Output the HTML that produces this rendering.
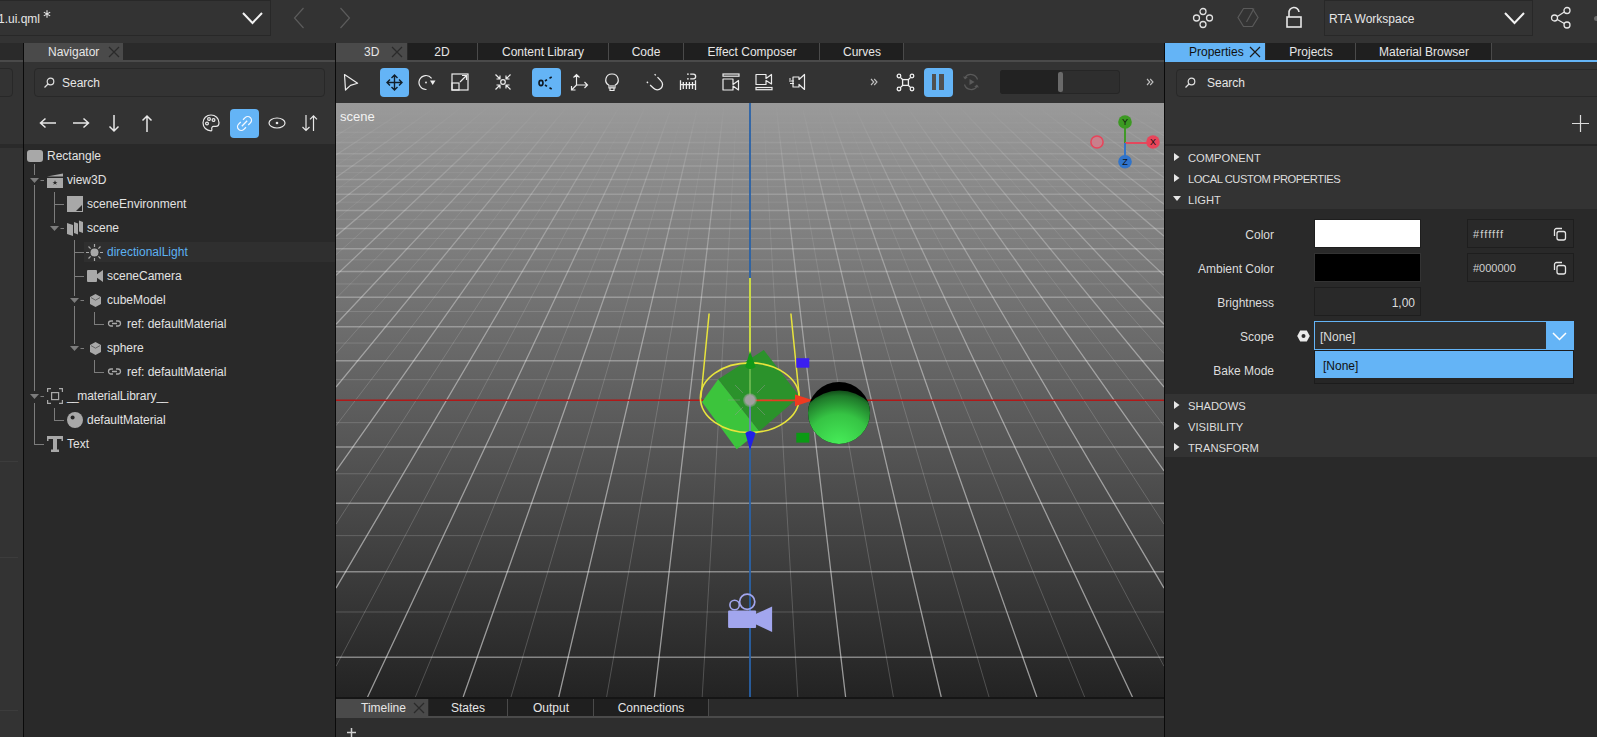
<!DOCTYPE html><html><head><meta charset="utf-8"><style>
*{box-sizing:border-box}
html,body{margin:0;padding:0}
body{width:1597px;height:737px;overflow:hidden;background:#333333;position:relative;font-family:"Liberation Sans",sans-serif;font-size:12px;color:#dcdcdc}
.a{position:absolute}
.t{position:absolute;white-space:nowrap;line-height:14px}
svg{position:absolute;overflow:visible}
</style></head><body>

<div class="a" style="left:0;top:0;width:1597px;height:43px;background:#333333"></div>
<div class="a" style="left:-2px;top:0;width:273px;height:36px;background:#333333;border:1px solid #282828"></div>
<div class="t" style="left:-2px;top:12px;font-size:12px;color:#e6e6e6">1.ui.qml</div>
<svg style="left:43px;top:10px" width="8" height="8"><path d="M4 0.3V7.7M0.8 2.1L7.2 5.9M0.8 5.9L7.2 2.1" stroke="#e6e6e6" stroke-width="1.1"/></svg>
<svg style="left:242px;top:12px" width="22" height="13"><path d="M1 1L10.5 11L20 1" stroke="#f2f2f2" stroke-width="2" fill="none"/></svg>
<svg style="left:293px;top:7px" width="12" height="22"><path d="M10.5 1L1.5 11L10.5 21" stroke="#5c5c5c" stroke-width="1.2" fill="none"/></svg>
<svg style="left:339px;top:7px" width="12" height="22"><path d="M1.5 1L10.5 11L1.5 21" stroke="#5c5c5c" stroke-width="1.2" fill="none"/></svg>
<svg style="left:1190px;top:6px" width="26" height="24" fill="none" stroke="#e0e0e0" stroke-width="1.3"><circle cx="13" cy="5.5" r="3"/><circle cx="13" cy="18.5" r="3"/><circle cx="6.5" cy="12" r="3"/><circle cx="19.5" cy="12" r="3"/></svg>
<svg style="left:1237px;top:7px" width="24" height="22" fill="none" stroke="#5a5a5a" stroke-width="1.2"><path d="M6.5 1.5H15.5L21 10.5L15.5 19.5H6.5L1 10.5Z"/><path d="M17 1.5L9.5 15"/></svg>
<svg style="left:1285px;top:7px" width="18" height="22" fill="none" stroke="#e6e6e6" stroke-width="1.6"><rect x="2" y="10" width="14" height="10"/><path d="M4 10V6A5 5 0 0 1 14 5"/></svg>
<div class="a" style="left:1324px;top:0;width:209px;height:36px;background:#333333;border:1px solid #282828"></div>
<div class="t" style="left:1329px;top:12px;font-size:12px;color:#e6e6e6">RTA Workspace</div>
<svg style="left:1504px;top:12px" width="22" height="13"><path d="M1 1L10.5 11L20 1" stroke="#f2f2f2" stroke-width="2" fill="none"/></svg>
<svg style="left:1550px;top:6px" width="24" height="24" fill="none" stroke="#e6e6e6" stroke-width="1.3"><circle cx="17" cy="4.5" r="3"/><circle cx="17" cy="19" r="3"/><circle cx="4.5" cy="12" r="3"/><path d="M7.3 10.5L14.3 6M7.3 13.5L14.3 17.5"/></svg>
<div class="a" style="left:1594px;top:16px;width:5px;height:5px;border-radius:50%;background:#6a6a6a"></div>
<div class="a" style="left:0;top:43px;width:23px;height:694px;background:#2e2e2e"></div>
<div class="a" style="left:0;top:43px;width:23px;height:17px;background:#2a2a2a"></div>
<div class="a" style="left:0;top:60px;width:23px;height:2px;background:#4a4a4a"></div>
<div class="a" style="left:0;top:62px;width:23px;height:82px;background:#333333"></div>
<div class="a" style="left:-10px;top:68px;width:23px;height:29px;border:1px solid #282828;border-radius:4px;background:#333333"></div>
<div class="a" style="left:0;top:144px;width:23px;height:593px;background:#333333"></div>
<div class="a" style="left:0;top:144px;width:23px;height:4px;background:#2a2a2a"></div>
<div class="a" style="left:0;top:461px;width:18px;height:1px;background:#3c3c3c"></div>
<div class="a" style="left:0;top:557px;width:18px;height:1px;background:#3c3c3c"></div>
<div class="a" style="left:0;top:710px;width:18px;height:1px;background:#3c3c3c"></div>
<div class="a" style="left:23px;top:43px;width:1px;height:694px;background:#0a0a0a"></div>
<div class="a" style="left:24px;top:43px;width:311px;height:694px;background:#292929"></div>
<div class="a" style="left:24px;top:43px;width:311px;height:17px;background:#2a2a2a"></div>
<div class="a" style="left:24px;top:43px;width:99px;height:17px;background:#4a4a4a"></div>
<div class="t" style="left:48px;top:45px;color:#e6e6e6">Navigator</div>
<svg style="left:108px;top:46px" width="12" height="12"><path d="M1 1L11 11M11 1L1 11" stroke="#2a2a2a" stroke-width="1.2"/></svg>
<div class="a" style="left:24px;top:60px;width:311px;height:2px;background:#4a4a4a"></div>
<div class="a" style="left:24px;top:62px;width:311px;height:82px;background:#333333"></div>
<div class="a" style="left:34px;top:68px;width:291px;height:29px;border:1px solid #282828;border-radius:4px;background:#333333"></div>
<svg style="left:43px;top:77px" width="12" height="12" fill="none" stroke="#e0e0e0" stroke-width="1.2"><circle cx="7.5" cy="4.5" r="3.3"/><path d="M5 7L1.5 10.5"/></svg>
<div class="t" style="left:62px;top:76px;color:#e6e6e6">Search</div>
<svg style="left:38px;top:116px" width="20" height="14" fill="none" stroke="#e8e8e8" stroke-width="1.5"><path d="M18 7H3M7.5 2.5L2.5 7L7.5 11.5"/></svg>
<svg style="left:71px;top:116px" width="20" height="14" fill="none" stroke="#e8e8e8" stroke-width="1.5"><path d="M2 7H17M12.5 2.5L17.5 7L12.5 11.5"/></svg>
<svg style="left:107px;top:114px" width="14" height="19" fill="none" stroke="#e8e8e8" stroke-width="1.5"><path d="M7 1V17M2.5 12.5L7 17L11.5 12.5"/></svg>
<svg style="left:140px;top:114px" width="14" height="19" fill="none" stroke="#e8e8e8" stroke-width="1.5"><path d="M7 18V2M2.5 6.5L7 2L11.5 6.5"/></svg>
<svg style="left:202px;top:114px" width="18" height="18" fill="none" stroke="#e8e8e8" stroke-width="1.2"><path d="M9 1C4.5 1 1 4.5 1 8.8C1 13.3 4.5 16.8 9 16.8C9.8 16.8 10 16 9.8 15.2C9.4 13.8 10.2 12.4 11.6 12.4H13.8C15.8 12.4 17 11 17 8.8C17 4.5 13.4 1 9 1Z"/><circle cx="7" cy="5" r="1.4"/><circle cx="11.5" cy="6" r="1.4"/><circle cx="5" cy="9.5" r="1.4"/></svg>
<div class="a" style="left:230px;top:109px;width:29px;height:29px;border-radius:4px;background:#64b4f6"></div>
<svg style="left:235px;top:114px" width="19" height="19" fill="none" stroke="#f4f8ff" stroke-width="1.3"><g transform="translate(9.5 9.5) rotate(-45)"><path d="M1.6 -3.7H4.6A3.7 3.7 0 0 1 4.6 3.7H1.6M-1.6 3.7H-4.6A3.7 3.7 0 0 1 -4.6 -3.7H-1.6M-3.8 0H3.8"/></g></svg>
<svg style="left:268px;top:117px" width="18" height="12" fill="none" stroke="#e8e8e8" stroke-width="1.2"><ellipse cx="9" cy="6" rx="8" ry="5"/><circle cx="9" cy="6" r="1.3" fill="#e8e8e8" stroke="none"/></svg>
<svg style="left:301px;top:114px" width="18" height="19" fill="none" stroke="#e8e8e8" stroke-width="1.2"><path d="M5 1V16.5M1.5 13L5 16.5L8.5 13"/><path d="M12.5 17V1.8M9 5.3L12.5 1.8L16 5.3"/></svg>
<div class="a" style="left:24px;top:144px;width:311px;height:593px;background:#292929"></div>
<div class="a" style="left:84px;top:242px;width:251px;height:20px;background:#2f2f2f"></div>
<div class="a" style="left:34px;top:164px;width:1px;height:11px;background:#7c7c7c"></div>
<div class="a" style="left:34px;top:185px;width:1px;height:206px;background:#7c7c7c"></div>
<div class="a" style="left:34px;top:403px;width:1px;height:42px;background:#7c7c7c"></div>
<div class="a" style="left:34px;top:444px;width:10px;height:1px;background:#7c7c7c"></div>
<svg style="left:30px;top:178px" width="15" height="6"><path d="M0 0H9L4.5 5Z" fill="#7c7c7c"/><path d="M10.5 2.5H14" stroke="#7c7c7c" stroke-width="1"/></svg>
<svg style="left:30px;top:394px" width="15" height="6"><path d="M0 0H9L4.5 5Z" fill="#7c7c7c"/><path d="M10.5 2.5H14" stroke="#7c7c7c" stroke-width="1"/></svg>
<div class="a" style="left:54px;top:192px;width:1px;height:31px;background:#7c7c7c"></div>
<div class="a" style="left:54px;top:204px;width:10px;height:1px;background:#7c7c7c"></div>
<svg style="left:50px;top:226px" width="15" height="6"><path d="M0 0H9L4.5 5Z" fill="#7c7c7c"/><path d="M10.5 2.5H14" stroke="#7c7c7c" stroke-width="1"/></svg>
<div class="a" style="left:54px;top:408px;width:1px;height:13px;background:#7c7c7c"></div>
<div class="a" style="left:54px;top:420px;width:10px;height:1px;background:#7c7c7c"></div>
<div class="a" style="left:74px;top:240px;width:1px;height:56px;background:#7c7c7c"></div>
<div class="a" style="left:74px;top:306px;width:1px;height:38px;background:#7c7c7c"></div>
<div class="a" style="left:74px;top:252px;width:10px;height:1px;background:#7c7c7c"></div>
<div class="a" style="left:74px;top:276px;width:10px;height:1px;background:#7c7c7c"></div>
<svg style="left:70px;top:298px" width="15" height="6"><path d="M0 0H9L4.5 5Z" fill="#7c7c7c"/><path d="M10.5 2.5H14" stroke="#7c7c7c" stroke-width="1"/></svg>
<svg style="left:70px;top:346px" width="15" height="6"><path d="M0 0H9L4.5 5Z" fill="#7c7c7c"/><path d="M10.5 2.5H14" stroke="#7c7c7c" stroke-width="1"/></svg>
<div class="a" style="left:94px;top:312px;width:1px;height:13px;background:#7c7c7c"></div>
<div class="a" style="left:94px;top:324px;width:10px;height:1px;background:#7c7c7c"></div>
<div class="a" style="left:94px;top:360px;width:1px;height:13px;background:#7c7c7c"></div>
<div class="a" style="left:94px;top:372px;width:10px;height:1px;background:#7c7c7c"></div>
<div class="a" style="left:27px;top:150px;width:16px;height:12px;border-radius:3px;background:#a8a8a8"></div>
<div class="t" style="left:47px;top:149px;color:#e2e2e2">Rectangle</div>
<svg style="left:46px;top:171px" width="18" height="18"><path d="M1 5.5L17 2.5V5.5Z" fill="#a8a8a8"/><rect x="1" y="7" width="16" height="10" fill="#a8a8a8"/><path d="M9 9.2L9.7 11H11.5L10 12L10.6 13.8L9 12.7L7.4 13.8L8 12L6.5 11H8.3Z" fill="#2a2a2a"/></svg>
<div class="t" style="left:67px;top:173px;color:#e2e2e2">view3D</div>
<svg style="left:67px;top:196px" width="16" height="16"><rect x="0" y="0" width="16" height="16" fill="#a8a8a8"/><path d="M15 9V15H9Z" fill="#2a2a2a"/></svg>
<div class="t" style="left:87px;top:197px;color:#e2e2e2">sceneEnvironment</div>
<svg style="left:67px;top:219px" width="17" height="17" fill="#a8a8a8"><path d="M0 4L6 6V17L0 15Z"/><path d="M7 3L11 4.5V15.5L7 14Z"/><path d="M12 1.5L16 3V14L12 12.5Z"/></svg>
<div class="t" style="left:87px;top:221px;color:#e2e2e2">scene</div>
<svg style="left:86px;top:244px" width="17" height="17"><circle cx="8.5" cy="8.5" r="4" fill="#a8a8a8"/><path d="M8.5 0V3M8.5 14V17M0 8.5H3M14 8.5H17M2.5 2.5L4.6 4.6M12.4 12.4L14.5 14.5M2.5 14.5L4.6 12.4M12.4 4.6L14.5 2.5" stroke="#a8a8a8" stroke-width="1.2"/></svg>
<div class="t" style="left:107px;top:245px;color:#5cb2f2">directionalLight</div>
<svg style="left:87px;top:269px" width="16" height="14" fill="#a8a8a8"><rect x="0" y="1" width="10" height="12" rx="1"/><path d="M9 6L16 1V13L9 8Z"/></svg>
<div class="t" style="left:107px;top:269px;color:#e2e2e2">sceneCamera</div>
<svg style="left:90px;top:294px" width="11" height="13"><path d="M5.5 0L11 3V10L5.5 13L0 10V3Z" fill="#a8a8a8"/><path d="M1 3.6L5.5 6.2L10 3.6" stroke="#5a5a5a" stroke-width="0.9" fill="none"/></svg>
<div class="t" style="left:107px;top:293px;color:#e2e2e2">cubeModel</div>
<svg style="left:108px;top:320px" width="13" height="7" fill="none" stroke="#a8a8a8" stroke-width="1.3"><path d="M5 1H3A2.5 2.5 0 0 0 3 6H5M8 1H10A2.5 2.5 0 0 1 10 6H8M4 3.5H9"/></svg>
<div class="t" style="left:127px;top:317px;color:#e2e2e2">ref: defaultMaterial</div>
<svg style="left:90px;top:342px" width="11" height="13"><path d="M5.5 0L11 3V10L5.5 13L0 10V3Z" fill="#a8a8a8"/><path d="M1 3.6L5.5 6.2L10 3.6" stroke="#5a5a5a" stroke-width="0.9" fill="none"/></svg>
<div class="t" style="left:107px;top:341px;color:#e2e2e2">sphere</div>
<svg style="left:108px;top:368px" width="13" height="7" fill="none" stroke="#a8a8a8" stroke-width="1.3"><path d="M5 1H3A2.5 2.5 0 0 0 3 6H5M8 1H10A2.5 2.5 0 0 1 10 6H8M4 3.5H9"/></svg>
<div class="t" style="left:127px;top:365px;color:#e2e2e2">ref: defaultMaterial</div>
<svg style="left:47px;top:388px" width="17" height="17" fill="none" stroke="#a8a8a8" stroke-width="1.2"><path d="M0.6 4V0.6H4M12 0.6H15.4V4M15.4 12V15.4H12M4 15.4H0.6V12"/><rect x="4.6" y="4.6" width="7" height="7"/></svg>
<div class="t" style="left:67px;top:389px;color:#e2e2e2"><span style="letter-spacing:-1.6px">__</span>materialLibrary<span style="letter-spacing:-1.6px">__</span></div>
<svg style="left:67px;top:412px" width="17" height="17"><circle cx="8" cy="8" r="8" fill="#a8a8a8"/><circle cx="5.6" cy="5.5" r="2" fill="#262626"/></svg>
<div class="t" style="left:87px;top:413px;color:#e2e2e2">defaultMaterial</div>
<svg style="left:47px;top:436px" width="17" height="17" fill="#a8a8a8"><path d="M0 0H16V5H14.5V3H10V13.5H12V16H4V13.5H6V3H1.5V5H0Z"/></svg>
<div class="t" style="left:67px;top:437px;color:#e2e2e2">Text</div>
<div class="a" style="left:335px;top:43px;width:1px;height:694px;background:#0a0a0a"></div>
<div class="a" style="left:336px;top:43px;width:828px;height:17px;background:#2a2a2a"></div>
<div class="a" style="left:336px;top:43px;width:71px;height:17px;background:#4a4a4a"></div>
<div class="a" style="left:408px;top:43px;width:69px;height:17px;background:#1f1f1f"></div>
<div class="a" style="left:477px;top:43px;width:1px;height:17px;background:#4a4a4a"></div>
<div class="a" style="left:478px;top:43px;width:130px;height:17px;background:#1f1f1f"></div>
<div class="a" style="left:608px;top:43px;width:1px;height:17px;background:#4a4a4a"></div>
<div class="a" style="left:609px;top:43px;width:74px;height:17px;background:#1f1f1f"></div>
<div class="a" style="left:683px;top:43px;width:1px;height:17px;background:#4a4a4a"></div>
<div class="a" style="left:684px;top:43px;width:135px;height:17px;background:#1f1f1f"></div>
<div class="a" style="left:819px;top:43px;width:1px;height:17px;background:#4a4a4a"></div>
<div class="a" style="left:820px;top:43px;width:83px;height:17px;background:#1f1f1f"></div>
<div class="a" style="left:903px;top:43px;width:1px;height:17px;background:#4a4a4a"></div>
<div class="t" style="left:364px;top:45px;color:#e6e6e6">3D</div>
<svg style="left:391px;top:46px" width="12" height="12"><path d="M1 1L11 11M11 1L1 11" stroke="#2a2a2a" stroke-width="1.2"/></svg>
<div class="t" style="left:292px;width:300px;text-align:center;top:45px;color:#e6e6e6">2D</div>
<div class="t" style="left:393px;width:300px;text-align:center;top:45px;color:#e6e6e6">Content Library</div>
<div class="t" style="left:496px;width:300px;text-align:center;top:45px;color:#e6e6e6">Code</div>
<div class="t" style="left:602px;width:300px;text-align:center;top:45px;color:#e6e6e6">Effect Composer</div>
<div class="t" style="left:712px;width:300px;text-align:center;top:45px;color:#e6e6e6">Curves</div>
<div class="a" style="left:336px;top:60px;width:828px;height:2px;background:#4a4a4a"></div>
<div class="a" style="left:336px;top:62px;width:828px;height:41px;background:#333333"></div>
<svg style="left:343px;top:73px" width="17" height="19" fill="none" stroke="#ececec" stroke-width="1.2"><path d="M1.5 1.5L14.6 10.2L7.5 12.4L2.5 17Z" stroke-linejoin="round"/></svg>
<div class="a" style="left:380px;top:68px;width:29px;height:29px;border-radius:4px;background:#64b4f6"></div>
<svg style="left:386px;top:74px" width="17" height="17" fill="none" stroke="#12202c" stroke-width="1.4"><path d="M8.5 1V16M1 8.5H16M5.5 4L8.5 1L11.5 4M5.5 13L8.5 16L11.5 13M4 5.5L1 8.5L4 11.5M13 5.5L16 8.5L13 11.5"/></svg>
<svg style="left:418px;top:74px" width="18" height="17" fill="none" stroke="#ececec" stroke-width="1.2"><path d="M13.6 4.3A7 7 0 1 0 8.5 15.5"/><circle cx="8" cy="8.5" r="0.9" fill="#ececec" stroke="none"/><path d="M12 6.5L17.5 6.5L14.7 11Z" fill="#ececec" stroke="none"/></svg>
<svg style="left:451px;top:73px" width="18" height="18" fill="none" stroke="#ececec" stroke-width="1.2"><rect x="1" y="1" width="16" height="16"/><rect x="1" y="10" width="7" height="7"/><path d="M9 9L15.5 2.5M11 2.5H15.5V7"/></svg>
<svg style="left:494px;top:73px" width="18" height="18" fill="none" stroke="#ececec" stroke-width="1.2"><circle cx="9" cy="9" r="2.3"/><path d="M1.5 1.5L6 6M6 2.5V6H2.5M16.5 1.5L12 6M12 2.5V6H15.5M1.5 16.5L6 12M2.5 12H6V15.5M16.5 16.5L12 12M15.5 12H12V15.5"/></svg>
<div class="a" style="left:532px;top:68px;width:29px;height:29px;border-radius:4px;background:#64b4f6"></div>
<svg style="left:537px;top:74px" width="20" height="18" fill="none" stroke="#0e1822"><ellipse cx="4" cy="9" rx="2" ry="2.6" stroke-width="1.6"/><path d="M8 7L10 5.6M12.5 4.2L14.7 3M8 11L10 12.4M12.5 13.8L14.7 15" stroke-width="1.6"/></svg>
<svg style="left:570px;top:73px" width="19" height="19" fill="none" stroke="#ececec" stroke-width="1.2"><path d="M6.5 12V1.5M3.5 4.5L6.5 1.5L9.5 4.5M6.5 12H17.5M14.5 9L17.5 12L14.5 15M6.5 12L1.5 17M1.5 13V17H5.5"/></svg>
<svg style="left:605px;top:73px" width="14" height="19" fill="none" stroke="#ececec" stroke-width="1.2"><path d="M7 1A6 6 0 0 0 4 12.3V15H10V12.3A6 6 0 0 0 7 1Z"/><path d="M5 15V17.5H9V15M6 12V15M8 12V15"/></svg>
<svg style="left:646px;top:73px" width="18" height="18" fill="none" stroke="#ececec" stroke-width="1.2"><path d="M11.5 4.1L15 7.9A5.2 5.2 0 0 1 7.6 15.3L4.1 12.1M8.6 1.2L9.8 2.4M0.8 8.8L2 10" stroke-width="1.3"/></svg>
<svg style="left:679px;top:73px" width="18" height="18" fill="none" stroke="#ececec" stroke-width="1.3"><path d="M1.5 7.2V16.9M16.5 7.2V16.9M1.5 11.7H16.5M4.3 9V15.9M7.4 9V15.9M10.4 9V15.9M13.5 9V15.9"/><path d="M8 1.2H9.8M8 5.9H9.8M11.2 1.2H14.3A2.35 2.35 0 0 1 14.3 5.9H11.2"/></svg>
<svg style="left:722px;top:73px" width="18" height="18" fill="none" stroke="#ececec" stroke-width="1.2"><rect x="1" y="1" width="16" height="2.2"/><path d="M1 6H11V11.5L16.5 7.5V17L11 13V17H1Z" stroke-linejoin="round"/></svg>
<svg style="left:755px;top:73px" width="18" height="18" fill="none" stroke="#ececec" stroke-width="1.2"><path d="M1 1.5H11V5.5L16.5 1.5V11L11 7.5V11.5H1Z" stroke-linejoin="round"/><rect x="1" y="14.5" width="16" height="2.2"/></svg>
<svg style="left:788px;top:73px" width="18" height="18" fill="none" stroke="#ececec" stroke-width="1.2"><path d="M5 4H11V6.5L16.5 1.5V16.5L11 11.5V14H5Z" stroke-linejoin="round"/><path d="M1 8H6M2 10.5H6M1 6H3"/></svg>
<svg style="left:870px;top:78px" width="8" height="8" fill="none" stroke="#c0c0c0" stroke-width="1.1"><path d="M1 1L3.8 4L1 7M4.2 1L7 4L4.2 7"/></svg>
<svg style="left:896px;top:73px" width="19" height="19" fill="none" stroke="#f0f0f0" stroke-width="1.3"><circle cx="3" cy="3" r="1.8"/><circle cx="16" cy="3" r="1.8"/><circle cx="3" cy="16" r="1.8"/><circle cx="16" cy="16" r="1.8"/><rect x="6.6" y="6.6" width="5.8" height="5.8"/><path d="M4.6 4.6L6.3 6.3M14.4 4.6L12.7 6.3M4.6 14.4L6.3 12.7M14.4 14.4L12.7 12.7"/></svg>
<div class="a" style="left:924px;top:68px;width:29px;height:29px;border-radius:4px;background:#64b4f6"></div>
<div class="a" style="left:932px;top:74px;width:4px;height:16px;background:#505050"></div>
<div class="a" style="left:939px;top:74px;width:5px;height:16px;background:#505050"></div>
<svg style="left:962px;top:73px" width="18" height="18" fill="none" stroke="#5a5a5a" stroke-width="1.2"><path d="M2.5 11.5A7 7 0 0 0 15 13.5M15.5 6.5A7 7 0 0 0 3 4.5"/><path d="M7.5 6V12L12.5 9Z" fill="#5a5a5a" stroke="none"/><path d="M1 3.5L3 6.5L5.8 4.3Z M17 14.5L15 11.5L12.2 13.7Z" fill="#5a5a5a" stroke="none"/></svg>
<div class="a" style="left:1000px;top:70px;width:120px;height:24px;border-radius:3px;background:#2e2e2e;border:1px solid #262626"></div>
<div class="a" style="left:1000px;top:70px;width:60px;height:24px;border-radius:3px 0 0 3px;background:#222222"></div>
<div class="a" style="left:1058px;top:72px;width:5px;height:20px;border-radius:2px;background:#6a6a6a"></div>
<svg style="left:1146px;top:78px" width="8" height="8" fill="none" stroke="#c0c0c0" stroke-width="1.1"><path d="M1 1L3.8 4L1 7M4.2 1L7 4L4.2 7"/></svg>
<svg style="left:336px;top:103px;overflow:hidden" width="828" height="594" viewBox="336 103 828 594">
<defs>
<linearGradient id="bg" x1="0" y1="103" x2="0" y2="697" gradientUnits="userSpaceOnUse">
<stop offset="0" stop-color="#9a9a9a"/><stop offset="1" stop-color="#232323"/></linearGradient>
<linearGradient id="fade" x1="0" y1="103" x2="0" y2="697" gradientUnits="userSpaceOnUse">
<stop offset="0" stop-color="#fff" stop-opacity="0"/><stop offset="0.05" stop-color="#fff" stop-opacity="0.12"/><stop offset="0.1" stop-color="#fff" stop-opacity="0.25"/><stop offset="0.2" stop-color="#fff" stop-opacity="0.45"/><stop offset="0.35" stop-color="#fff" stop-opacity="0.65"/><stop offset="0.5" stop-color="#fff" stop-opacity="0.8"/><stop offset="1" stop-color="#fff" stop-opacity="1"/></linearGradient>
<mask id="fm" maskUnits="userSpaceOnUse" x="336" y="103" width="828" height="594"><rect x="336" y="103" width="828" height="594" fill="url(#fade)"/></mask>
<linearGradient id="fade2" x1="0" y1="103" x2="0" y2="697" gradientUnits="userSpaceOnUse">
<stop offset="0" stop-color="#fff" stop-opacity="0"/><stop offset="0.03" stop-color="#fff" stop-opacity="0.05"/><stop offset="0.1" stop-color="#fff" stop-opacity="0.3"/><stop offset="0.25" stop-color="#fff" stop-opacity="0.6"/><stop offset="0.5" stop-color="#fff" stop-opacity="0.8"/><stop offset="1" stop-color="#fff" stop-opacity="1"/></linearGradient>
<mask id="fm2" maskUnits="userSpaceOnUse" x="336" y="103" width="828" height="594"><rect x="336" y="103" width="828" height="594" fill="url(#fade2)"/></mask>
<radialGradient id="sph" cx="839" cy="447" r="60" gradientUnits="userSpaceOnUse">
<stop offset="0" stop-color="#48f05a"/><stop offset="0.55" stop-color="#36c444"/><stop offset="0.85" stop-color="#1f7a2a"/><stop offset="1" stop-color="#0a300f"/></radialGradient>
<radialGradient id="bulb" cx="750" cy="400" r="8" gradientUnits="userSpaceOnUse"><stop offset="0.55" stop-color="#a0a0a0"/><stop offset="1" stop-color="#a0a0a0" stop-opacity="0"/></radialGradient>
</defs>
<rect x="336" y="103" width="828" height="594" fill="url(#bg)"/>
<g mask="url(#fm)">
<path d="M351.24 103.00L336.00 111.36M376.97 103.00L336.00 127.02M402.69 103.00L336.00 144.99M428.42 103.00L336.00 165.85M454.15 103.00L336.00 190.32M479.87 103.00L336.00 219.47M505.60 103.00L336.00 254.74M531.33 103.00L336.00 298.32M557.05 103.00L336.00 353.52M582.78 103.00L336.00 425.70M608.51 103.00L336.00 524.14M634.23 103.00L336.00 666.31M659.96 103.00L415.36 697.00M685.68 103.00L510.97 697.00M711.41 103.00L606.58 697.00M737.14 103.00L702.19 697.00M762.86 103.00L797.81 697.00M788.59 103.00L893.42 697.00M814.32 103.00L989.03 697.00M840.04 103.00L1084.64 697.00M865.77 103.00L1164.00 666.31M891.49 103.00L1164.00 524.14M917.22 103.00L1164.00 425.70M942.95 103.00L1164.00 353.52M968.67 103.00L1164.00 298.32M994.40 103.00L1164.00 254.74M1020.13 103.00L1164.00 219.47M1045.85 103.00L1164.00 190.32M1071.58 103.00L1164.00 165.85M1097.31 103.00L1164.00 144.99M1123.03 103.00L1164.00 127.02M1148.76 103.00L1164.00 111.36" stroke="#ffffff" stroke-opacity="0.2" stroke-width="1" fill="none"/>
<path d="M338.38 103.00L336.00 104.26M364.11 103.00L336.00 118.93M389.83 103.00L336.00 135.68M415.56 103.00L336.00 155.02M441.28 103.00L336.00 177.57M467.01 103.00L336.00 204.23M492.74 103.00L336.00 236.22M518.46 103.00L336.00 275.32M544.19 103.00L336.00 324.20M569.92 103.00L336.00 387.03M595.64 103.00L336.00 470.82M621.37 103.00L336.00 588.12M647.09 103.00L367.56 697.00M672.82 103.00L463.17 697.00M698.55 103.00L558.78 697.00M724.27 103.00L654.39 697.00M775.73 103.00L845.61 697.00M801.45 103.00L941.22 697.00M827.18 103.00L1036.83 697.00M852.91 103.00L1132.44 697.00M878.63 103.00L1164.00 588.12M904.36 103.00L1164.00 470.82M930.08 103.00L1164.00 387.03M955.81 103.00L1164.00 324.20M981.54 103.00L1164.00 275.32M1007.26 103.00L1164.00 236.22M1032.99 103.00L1164.00 204.23M1058.72 103.00L1164.00 177.57M1084.44 103.00L1164.00 155.02M1110.17 103.00L1164.00 135.68M1135.89 103.00L1164.00 118.93M1161.62 103.00L1164.00 104.26" stroke="#ffffff" stroke-opacity="0.54" stroke-width="1.3" fill="none"/>
</g>
<g mask="url(#fm2)">
<path d="M336.00 109.78L1164.00 109.78M336.00 118.28L1164.00 118.28M336.00 127.44L1164.00 127.44M336.00 137.35L1164.00 137.35M336.00 148.10L1164.00 148.10M336.00 159.81L1164.00 159.81M336.00 172.61L1164.00 172.61M336.00 186.65L1164.00 186.65M336.00 202.13L1164.00 202.13M336.00 219.28L1164.00 219.28M336.00 238.39L1164.00 238.39M336.00 259.81L1164.00 259.81M336.00 283.99L1164.00 283.99M336.00 311.49L1164.00 311.49M336.00 343.07L1164.00 343.07M336.00 379.68L1164.00 379.68M336.00 422.65L1164.00 422.65M336.00 473.77L1164.00 473.77M336.00 535.63L1164.00 535.63M336.00 611.98L1164.00 611.98" stroke="#ffffff" stroke-opacity="0.2" stroke-width="1" fill="none"/>
<path d="M336.00 105.76L1164.00 105.76M336.00 113.95L1164.00 113.95M336.00 122.77L1164.00 122.77M336.00 132.30L1164.00 132.30M336.00 142.62L1164.00 142.62M336.00 153.83L1164.00 153.83M336.00 166.06L1164.00 166.06M336.00 179.46L1164.00 179.46M336.00 194.20L1164.00 194.20M336.00 210.48L1164.00 210.48M336.00 228.57L1164.00 228.57M336.00 248.78L1164.00 248.78M336.00 271.52L1164.00 271.52M336.00 297.28L1164.00 297.28M336.00 326.72L1164.00 326.72M336.00 360.67L1164.00 360.67M336.00 447.05L1164.00 447.05M336.00 503.16L1164.00 503.16M336.00 571.69L1164.00 571.69M336.00 657.30L1164.00 657.30" stroke="#ffffff" stroke-opacity="0.44" stroke-width="1.5" fill="none"/>
</g>
<path d="M336 400.3H1164" stroke="#b01818" stroke-width="1.6"/>
<path d="M750.0 103V697" stroke="#2a62a8" stroke-width="1.8"/>
<polygon points="702,402 718.2,379.2 759.4,431.3 736.7,449.3" fill="#3cc43c"/>
<polygon points="718.2,379.2 763.8,349.9 799.6,396.6 759.4,431.3" fill="#2b922b"/>
<g stroke="#9a9a9a" stroke-opacity="0.45" stroke-width="1"><path d="M740 400H728M760 400H772M750 390V380M750 410V420M743 393L735 385M757 393L765 385M743 407L735 415M757 407L765 415"/></g>
<ellipse cx="749.8" cy="397.7" rx="49.4" ry="34.8" fill="none" stroke="#e8e43c" stroke-width="1.6"/>
<path d="M709.1 313.5L700.9 397.7M790.9 313.5L799.2 395.5" stroke="#e8e43c" stroke-width="1.5" fill="none"/>
<path d="M750.0 278V366" stroke="#d2e040" stroke-width="1.9" fill="none"/>
<path d="M750.0 369V400" stroke="#70c050" stroke-width="1.5"/>
<path d="M750.0 400V431" stroke="#7a7ad0" stroke-width="1.5"/>
<path d="M755 400.3H796" stroke="#e83a22" stroke-width="1.8"/>
<path d="M795 394.5L813 400.3L795 406.2Z" fill="#f03a20"/>
<path d="M750.0 351L755.7 367Q750.0 371 745.3 367Z" fill="#109a18"/>
<path d="M750.0 450L755.7 433Q750.0 429 745.3 433Z" fill="#2020e8"/>
<circle cx="750.0" cy="400.3" r="7" fill="url(#bulb)"/>
<rect x="796.3" y="358.2" width="13" height="9.5" fill="#3a1ef0"/>
<rect x="796.3" y="432.8" width="13" height="9.8" fill="#0a9a14"/>
<clipPath id="sc"><circle cx="839" cy="412.9" r="31"/></clipPath>
<circle cx="839" cy="412.9" r="31" fill="#000"/>
<g clip-path="url(#sc)"><circle cx="839.5" cy="432.5" r="41.9" fill="url(#sph)"/></g>
<rect x="728.1" y="610.4" width="28" height="17.5" rx="1" fill="#a2a6ee"/>
<path d="M755.5 614.1L772.1 606.6V632L755.5 624.2Z" fill="#a2a6ee"/>
<circle cx="734.6" cy="605" r="4.7" fill="none" stroke="#a2a6ee" stroke-width="1.6"/>
<circle cx="747.2" cy="601.8" r="7.6" fill="none" stroke="#a2a6ee" stroke-width="1.7"/>
<path d="M1125 143V122" stroke="#3c9a22" stroke-width="1.9"/>
<path d="M1125 143H1153" stroke="#e8445a" stroke-width="1.9"/>
<path d="M1125 143V162" stroke="#2f74cc" stroke-width="1.9"/>
<circle cx="1125" cy="122" r="6.8" fill="#3c9a22"/>
<circle cx="1153" cy="142" r="6.8" fill="#e8445a"/>
<circle cx="1125" cy="161.8" r="6.8" fill="#2f74cc"/>
<circle cx="1097" cy="142" r="6.1" fill="#c8808c" stroke="#e8445a" stroke-width="1.5"/>
<g font-family="Liberation Sans" font-size="9" fill="#111" text-anchor="middle"><text x="1125" y="125.2">Y</text><text x="1153" y="145.2">X</text><text x="1125" y="165">Z</text></g>
</svg>
<div class="t" style="left:340px;top:110px;font-size:13px;color:#f2f2f2">scene</div>
<div class="a" style="left:336px;top:697px;width:828px;height:2px;background:#151515"></div>
<div class="a" style="left:336px;top:699px;width:828px;height:17px;background:#2a2a2a"></div>
<div class="a" style="left:336px;top:699px;width:92px;height:17px;background:#4a4a4a"></div>
<div class="a" style="left:429px;top:699px;width:78px;height:17px;background:#1f1f1f"></div>
<div class="a" style="left:507px;top:699px;width:1px;height:17px;background:#4a4a4a"></div>
<div class="a" style="left:508px;top:699px;width:85px;height:17px;background:#1f1f1f"></div>
<div class="a" style="left:593px;top:699px;width:1px;height:17px;background:#4a4a4a"></div>
<div class="a" style="left:594px;top:699px;width:114px;height:17px;background:#1f1f1f"></div>
<div class="a" style="left:708px;top:699px;width:1px;height:17px;background:#4a4a4a"></div>
<div class="t" style="left:361px;top:701px;color:#e6e6e6">Timeline</div>
<svg style="left:413px;top:702px" width="12" height="12"><path d="M1 1L11 11M11 1L1 11" stroke="#2a2a2a" stroke-width="1.2"/></svg>
<div class="t" style="left:318px;width:300px;text-align:center;top:701px;color:#e6e6e6">States</div>
<div class="t" style="left:401px;width:300px;text-align:center;top:701px;color:#e6e6e6">Output</div>
<div class="t" style="left:501px;width:300px;text-align:center;top:701px;color:#e6e6e6">Connections</div>
<div class="a" style="left:336px;top:716px;width:828px;height:2px;background:#4a4a4a"></div>
<div class="a" style="left:336px;top:718px;width:828px;height:19px;background:#2e2e2e"></div>
<svg style="left:347px;top:728px" width="10" height="10"><path d="M4.5 0V9M0 4.5H9" stroke="#d0d0d0" stroke-width="1.5"/></svg>
<div class="a" style="left:1164px;top:43px;width:1px;height:694px;background:#0a0a0a"></div>
<div class="a" style="left:1165px;top:43px;width:432px;height:694px;background:#292929"></div>
<div class="a" style="left:1165px;top:43px;width:432px;height:17px;background:#2a2a2a"></div>
<div class="a" style="left:1165px;top:43px;width:100px;height:17px;background:#64b4f6"></div>
<div class="t" style="left:1189px;top:45px;color:#111">Properties</div>
<svg style="left:1249px;top:46px" width="12" height="12"><path d="M1 1L11 11M11 1L1 11" stroke="#1a1a1a" stroke-width="1.2"/></svg>
<div class="a" style="left:1266px;top:43px;width:89px;height:17px;background:#1f1f1f"></div>
<div class="a" style="left:1355px;top:43px;width:1px;height:17px;background:#4a4a4a"></div>
<div class="t" style="left:1161px;width:300px;text-align:center;top:45px;color:#e6e6e6">Projects</div>
<div class="a" style="left:1356px;top:43px;width:135px;height:17px;background:#1f1f1f"></div>
<div class="a" style="left:1491px;top:43px;width:1px;height:17px;background:#4a4a4a"></div>
<div class="t" style="left:1274px;width:300px;text-align:center;top:45px;color:#e6e6e6">Material Browser</div>
<div class="a" style="left:1165px;top:60px;width:432px;height:2px;background:#64b4f6"></div>
<div class="a" style="left:1165px;top:62px;width:432px;height:82px;background:#333333"></div>
<div class="a" style="left:1176px;top:69px;width:430px;height:28px;border:1px solid #282828;border-radius:4px;background:#333333"></div>
<svg style="left:1184px;top:77px" width="12" height="12" fill="none" stroke="#e0e0e0" stroke-width="1.2"><circle cx="7.5" cy="4.5" r="3.3"/><path d="M5 7L1.5 10.5"/></svg>
<div class="t" style="left:1207px;top:76px;color:#e6e6e6">Search</div>
<svg style="left:1572px;top:115px" width="17" height="17"><path d="M8.5 0V17M0 8.5H17" stroke="#dcdcdc" stroke-width="1.2"/></svg>
<div class="a" style="left:1165px;top:144px;width:432px;height:2px;background:#262626"></div>
<div class="a" style="left:1165px;top:146px;width:432px;height:21px;background:#333333"></div>
<svg style="left:1174px;top:153px" width="6" height="9"><path d="M0 0L5.5 4L0 8Z" fill="#e6e6e6"/></svg>
<div class="t" style="left:1188px;top:151px;font-size:11.2px;letter-spacing:0;color:#dedede">COMPONENT</div>
<div class="a" style="left:1165px;top:167px;width:432px;height:21px;background:#333333"></div>
<svg style="left:1174px;top:174px" width="6" height="9"><path d="M0 0L5.5 4L0 8Z" fill="#e6e6e6"/></svg>
<div class="t" style="left:1188px;top:172px;font-size:11.2px;letter-spacing:-0.45px;color:#dedede">LOCAL CUSTOM PROPERTIES</div>
<div class="a" style="left:1165px;top:188px;width:432px;height:21px;background:#333333"></div>
<svg style="left:1173px;top:196px" width="9" height="6"><path d="M0 0H8L4 5Z" fill="#e6e6e6"/></svg>
<div class="t" style="left:1188px;top:193px;font-size:11.2px;letter-spacing:0;color:#dedede">LIGHT</div>
<div class="a" style="left:1165px;top:209px;width:432px;height:185px;background:#292929"></div>
<div class="t" style="left:1074px;width:200px;text-align:right;top:228px;color:#dcdcdc">Color</div>
<div class="t" style="left:1074px;width:200px;text-align:right;top:262px;color:#dcdcdc">Ambient Color</div>
<div class="t" style="left:1074px;width:200px;text-align:right;top:296px;color:#dcdcdc">Brightness</div>
<div class="t" style="left:1074px;width:200px;text-align:right;top:330px;color:#dcdcdc">Scope</div>
<div class="t" style="left:1074px;width:200px;text-align:right;top:364px;color:#dcdcdc">Bake Mode</div>
<div class="a" style="left:1314px;top:219px;width:107px;height:29px;background:#ffffff;border:1px solid #1e1e1e"></div>
<div class="a" style="left:1314px;top:253px;width:107px;height:29px;background:#000000;border:1px solid #333"></div>
<div class="a" style="left:1314px;top:287px;width:107px;height:29px;background:#292929;border:1px solid #1e1e1e"></div>
<div class="t" style="left:1314px;width:101px;text-align:right;top:296px;color:#dcdcdc">1,00</div>
<div class="a" style="left:1467px;top:219px;width:107px;height:29px;background:#292929;border:1px solid #1e1e1e"></div>
<div class="t" style="left:1473px;top:227px;font-size:11px;letter-spacing:1.1px;color:#cfcfcf">#ffffff</div>
<svg style="left:1552px;top:227px" width="15" height="14" fill="none" stroke="#e6e6e6" stroke-width="1.3"><path d="M2.5 9V3.5A2 2 0 0 1 4.5 1.5H10"/><rect x="5" y="4.5" width="8.5" height="8.5" rx="2"/></svg>
<div class="a" style="left:1467px;top:253px;width:107px;height:29px;background:#292929;border:1px solid #1e1e1e"></div>
<div class="t" style="left:1473px;top:261px;font-size:11px;letter-spacing:0;color:#cfcfcf">#000000</div>
<svg style="left:1552px;top:261px" width="15" height="14" fill="none" stroke="#e6e6e6" stroke-width="1.3"><path d="M2.5 9V3.5A2 2 0 0 1 4.5 1.5H10"/><rect x="5" y="4.5" width="8.5" height="8.5" rx="2"/></svg>
<svg style="left:1297px;top:330px" width="13" height="12"><path d="M3.2 0.5H9.8L12.8 6L9.8 11.5H3.2L0.2 6Z" fill="#eaeaea"/><circle cx="6.5" cy="6" r="2" fill="#2a2a2a"/></svg>
<div class="a" style="left:1314px;top:321px;width:260px;height:29px;background:#2f2f2f;border:1px solid #64b4f6"></div>
<div class="a" style="left:1546px;top:321px;width:28px;height:29px;background:#64b4f6"></div>
<svg style="left:1552px;top:332px" width="15" height="9"><path d="M1 1L7.5 7.5L14 1" stroke="#ffffff" stroke-width="1.5" fill="none"/></svg>
<div class="t" style="left:1320px;top:330px;color:#dcdcdc">[None]</div>
<div class="a" style="left:1314px;top:350px;width:260px;height:34px;background:#262626;border:1px solid #1c1c1c"></div>
<div class="a" style="left:1315px;top:351px;width:258px;height:27px;background:#64b4f6"></div>
<div class="t" style="left:1323px;top:359px;color:#111">[None]</div>
<div class="a" style="left:1165px;top:394px;width:432px;height:21px;background:#333333"></div>
<svg style="left:1174px;top:401px" width="6" height="9"><path d="M0 0L5.5 4L0 8Z" fill="#e6e6e6"/></svg>
<div class="t" style="left:1188px;top:399px;font-size:11.2px;letter-spacing:0;color:#dedede">SHADOWS</div>
<div class="a" style="left:1165px;top:415px;width:432px;height:21px;background:#333333"></div>
<svg style="left:1174px;top:422px" width="6" height="9"><path d="M0 0L5.5 4L0 8Z" fill="#e6e6e6"/></svg>
<div class="t" style="left:1188px;top:420px;font-size:11.2px;letter-spacing:0;color:#dedede">VISIBILITY</div>
<div class="a" style="left:1165px;top:436px;width:432px;height:21px;background:#333333"></div>
<svg style="left:1174px;top:443px" width="6" height="9"><path d="M0 0L5.5 4L0 8Z" fill="#e6e6e6"/></svg>
<div class="t" style="left:1188px;top:441px;font-size:11.2px;letter-spacing:0;color:#dedede">TRANSFORM</div>
</body></html>
